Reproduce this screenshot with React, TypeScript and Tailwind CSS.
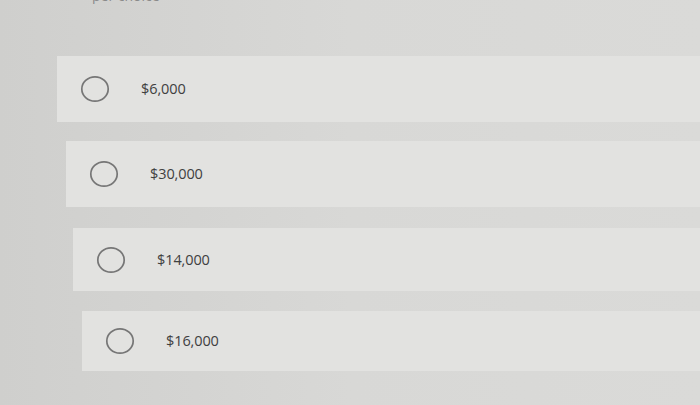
const options = [
  { label: '$6,000', indent: 'ml-[57px]', height: 'h-[66px]', gap: 'mt-[56px]' },
  { label: '$30,000', indent: 'ml-[66px]', height: 'h-[66px]', gap: 'mt-[19px]' },
  { label: '$14,000', indent: 'ml-[73px]', height: 'h-[63px]', gap: 'mt-[21px]' },
  { label: '$16,000', indent: 'ml-[82px]', height: 'h-[60px]', gap: 'mt-[20px]' },
];

function Radio() {
  return (
    <svg width="30" height="28" viewBox="0 0 30 28" className="shrink-0">
      <ellipse cx="15" cy="14" rx="13.2" ry="12.2" fill="none" stroke="#767676" strokeWidth="1.7" />
    </svg>
  );
}

export default function App() {
  return (
    <div
      className="w-[700px] h-[405px] overflow-hidden bg-gradient-to-r from-[#cfcfcd] via-[#d8d8d6] to-[#dadad8]"
      style={{ fontFamily: '"Open Sans", "Liberation Sans", sans-serif' }}
    >
      <div className="h-[4px] overflow-hidden pl-[92px]">
        <p className="-mt-[12px] text-[14px] leading-[16px] text-[#8a8a8a]">per choice</p>
      </div>
      <div className="flex flex-col -mt-[4px]">
        {options.map((o) => (
          <label
            key={o.label}
            className={`${o.gap} ${o.indent} ${o.height} flex items-center pl-[23px] bg-[#e2e2e0]`}
          >
            <Radio />
            <span className="ml-[31px] text-[14.5px] tracking-[-0.1px] text-[#404040]">{o.label}</span>
          </label>
        ))}
      </div>
    </div>
  );
}
